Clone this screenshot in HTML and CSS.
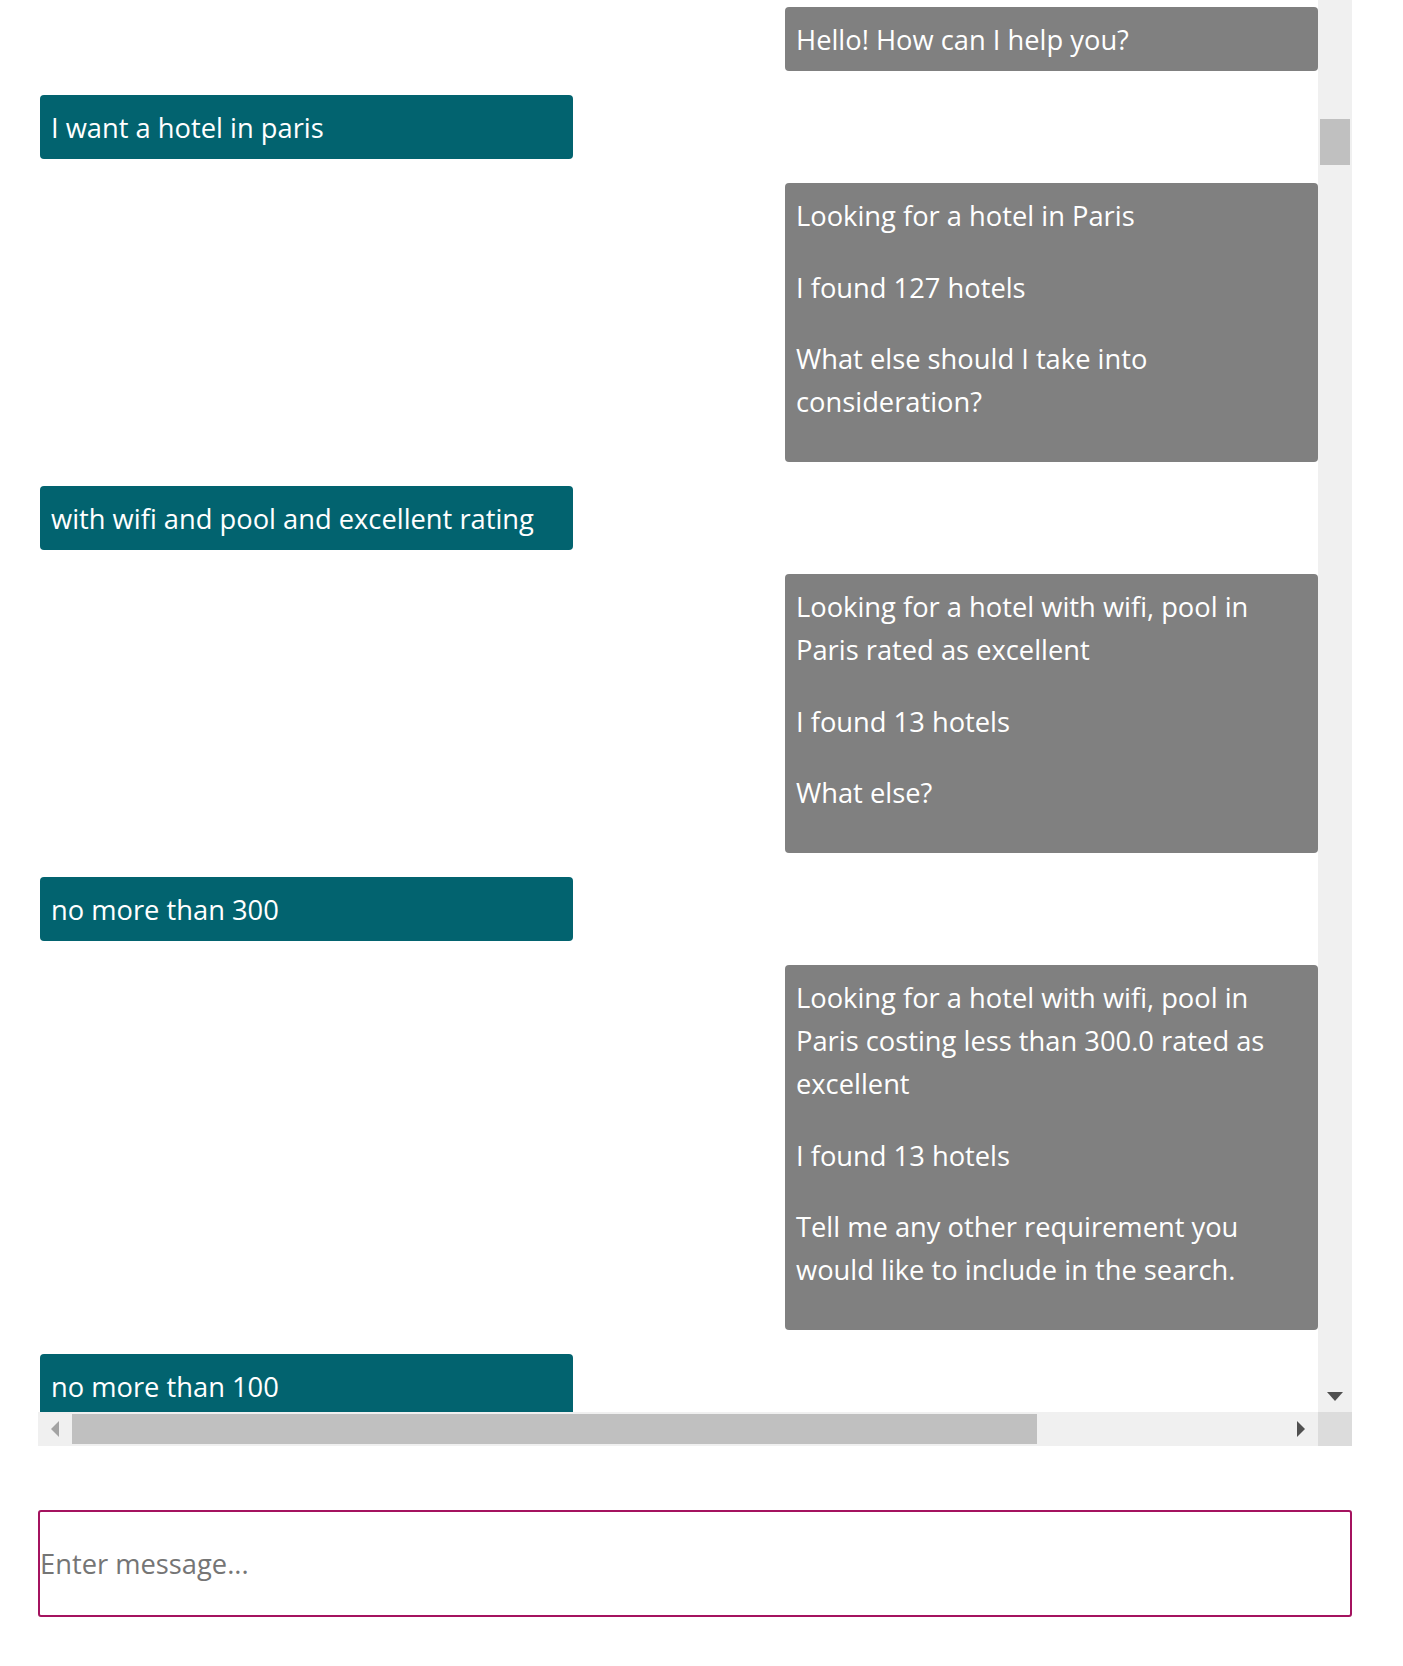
FILE: index.html
```html
<!DOCTYPE html>
<html lang="en">
<head>
<meta charset="utf-8">
<title>Hotel chat</title>
<link rel="stylesheet" href="styles.css">
</head>
<body>
<div class="chat">
  <div class="viewport">
    <div class="messages">
      <div class="msg bot"><p>Hello! How can I help you?</p></div>
      <div class="msg user">I want a hotel in paris</div>
      <div class="msg bot multi">
        <p>Looking for a hotel in Paris</p>
        <p>I found 127 hotels</p>
        <p>What else should I take into consideration?</p>
      </div>
      <div class="msg user">with wifi and pool and excellent rating</div>
      <div class="msg bot multi">
        <p>Looking for a hotel with wifi, pool in Paris rated as excellent</p>
        <p>I found 13 hotels</p>
        <p>What else?</p>
      </div>
      <div class="msg user">no more than 300</div>
      <div class="msg bot multi">
        <p>Looking for a hotel with wifi, pool in Paris costing less than 300.0 rated as excellent</p>
        <p>I found 13 hotels</p>
        <p>Tell me any other requirement you would like to include in the search.</p>
      </div>
      <div class="msg user">no more than 100</div>
    </div>
  </div>
  <div class="vbar">
    <div class="vthumb"></div>
    <div class="vspace"></div>
    <div class="sbtn"><span class="tri down"></span></div>
  </div>
  <div class="hbar">
    <div class="sbtn"><span class="tri left"></span></div>
    <div class="hthumb"></div>
    <div class="hspace"></div>
    <div class="sbtn"><span class="tri right"></span></div>
  </div>
  <div class="corner"></div>
</div>
<div class="composer">
  <input class="entry" type="text" placeholder="Enter message...">
</div>
</body>
</html>
```

FILE: styles.css
```css
html, body {
  margin: 0;
  padding: 0;
  background: #ffffff;
}

body {
  font-family: "Open Sans", "Noto Sans", sans-serif;
  font-size: 27.3px;
  line-height: 42.9px;
}

.chat {
  margin-left: 38px;
  width: 1314px;
  display: grid;
  grid-template-columns: 1280px 34px;
  grid-template-rows: 1412px 34px;
}

.viewport {
  overflow: hidden;
}

.messages {
  display: flex;
  flex-direction: column;
  gap: 24px;
  padding: 7px 0 0 2px;
}

.msg {
  box-sizing: border-box;
  width: 533px;
  padding: 11.8px 11px 9.3px;
  border-radius: 4px;
  color: #ffffff;
}

.msg p {
  margin: 0;
}

.msg.multi p {
  margin-bottom: 28.8px;
}

.user {
  align-self: flex-start;
  background: #02636f;
}

.bot {
  align-self: flex-end;
  background: #808080;
}

.vbar {
  background: #f0f0f0;
  display: flex;
  flex-direction: column;
}

.vthumb {
  margin: 119px 2px 0;
  height: 46px;
  background: #c0c0c0;
}

.vspace {
  flex: 1;
}

.hbar {
  background: #f0f0f0;
  display: flex;
}

.hthumb {
  width: 965px;
  margin: 2px 0;
  background: #c0c0c0;
}

.hspace {
  flex: 1;
}

.sbtn {
  width: 34px;
  height: 34px;
  flex: none;
  display: flex;
  align-items: center;
  justify-content: center;
}

.tri {
  width: 0;
  height: 0;
}

.tri.down {
  border-left: 8px solid transparent;
  border-right: 8px solid transparent;
  border-top: 9px solid #505050;
  margin-top: 2px;
}

.tri.left {
  border-top: 8px solid transparent;
  border-bottom: 8px solid transparent;
  border-right: 8px solid #a3a3a3;
}

.tri.right {
  border-top: 8px solid transparent;
  border-bottom: 8px solid transparent;
  border-left: 8px solid #505050;
}

.corner {
  background: #dcdcdc;
}

.composer {
  margin: 64px 0 0 38px;
  width: 1314px;
  height: 107px;
  box-sizing: border-box;
  border: 2px solid #a4135f;
  border-radius: 3px;
  display: flex;
}

.entry {
  flex: 1;
  border: none;
  outline: none;
  padding: 0;
  margin: 0;
  background: transparent;
  font-family: "Open Sans", "Noto Sans", sans-serif;
  font-size: 27.3px;
  color: #333333;
}

.entry::placeholder {
  color: #757575;
}
```
